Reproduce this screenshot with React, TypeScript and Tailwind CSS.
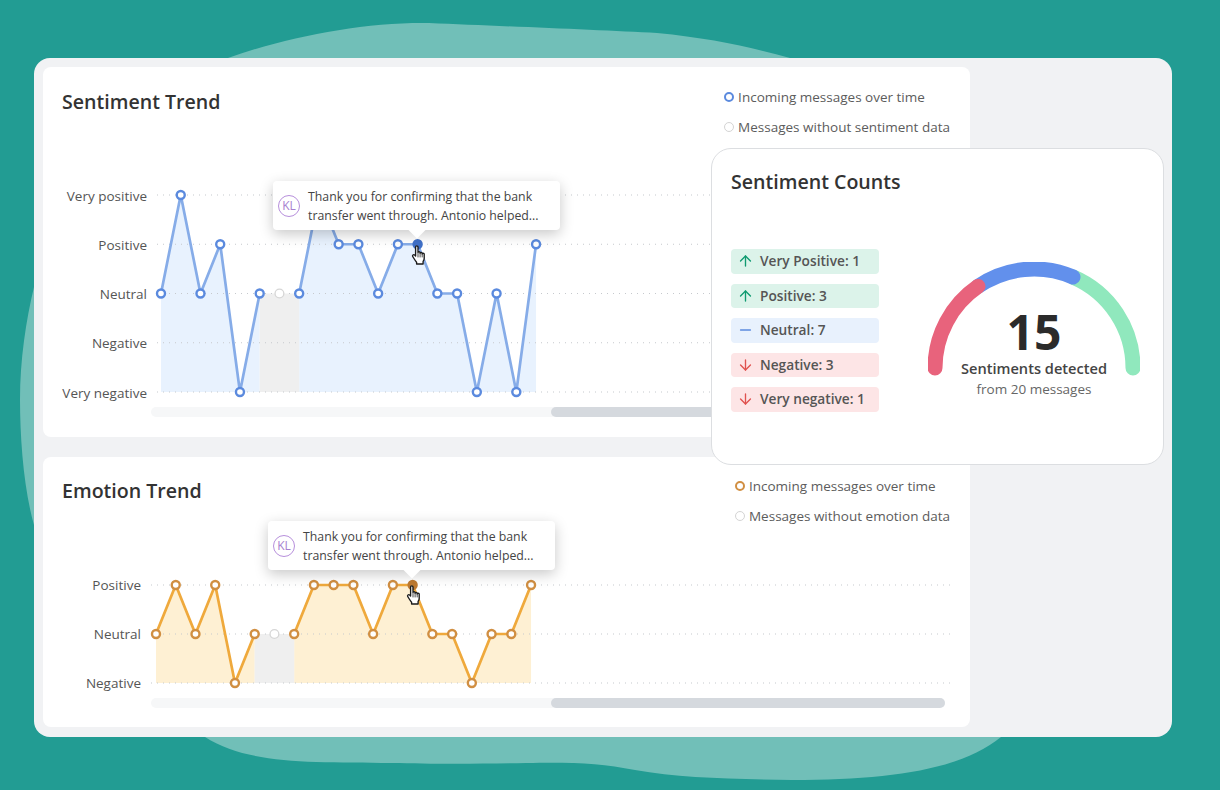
import { ArrowUp, ArrowDown, Minus } from "lucide-react";

const FONT = "font-['Open_Sans','Noto_Sans',sans-serif]";

type Theme = {
  line: string;
  dot: string;
  fill: string;
  active: string;
};

const BLUE: Theme = { line: "#86ace8", dot: "#5b8ade", fill: "#e8f2fe", active: "#3f70c8" };
const AMBER: Theme = { line: "#efa93c", dot: "#d18f42", fill: "#fef0d3", active: "#bd7a33" };

function Hand({ x, y }: { x: number; y: number }) {
  return (
    <g transform={`translate(${x} ${y})`} stroke="#1a1a1a" strokeWidth="1.35" strokeLinejoin="round" strokeLinecap="round">
      <path
        fill="#ffffff"
        d="M3.6 2c0-1.6 2.4-1.6 2.4 0v5.6c0-1.2 2.1-1.2 2.1 0v.6c0-1.2 2.1-1.2 2.1 0v.7c0-1.1 2-1.1 2 0v4.3c0 1.4-.5 2.4-1.1 3.2V19H4.6v-1.8C3.2 15.8 2 13.6.8 11.6 0 10.2 1.5 9 2.7 10l.9 1Z"
      />
      <path fill="none" strokeWidth="0.8" d="M6 8.5v3.5M8.1 8.8v3.2M10.2 9.2v2.8" />
    </g>
  );
}

function Chart({
  viewBox,
  width,
  height,
  ys,
  xs,
  gridStart,
  vals,
  theme,
  grey,
  active,
  hand,
}: {
  viewBox: string;
  width: number;
  height: number;
  ys: number[];
  xs: number[];
  gridStart: number;
  vals: number[];
  theme: Theme;
  grey: number;
  active: number;
  hand: [number, number];
}) {
  const base = ys[ys.length - 1];
  const pt = (i: number) => `${xs[i]},${ys[vals[i]]}`;
  const range = (a: number, b: number) => Array.from({ length: b - a + 1 }, (_, k) => a + k);
  const area = (a: number, b: number) =>
    `${xs[a]},${base} ` + range(a, b).map(pt).join(" ") + ` ${xs[b]},${base}`;
  const last = xs.length - 1;
  return (
    <svg width={width} height={height} viewBox={viewBox} className="shrink-0">
      <polygon points={area(0, grey - 1)} fill={theme.fill} />
      <polygon points={area(grey + 1, last)} fill={theme.fill} />
      <polygon points={area(grey - 1, grey + 1)} fill="#efefef" />
      {ys.map((y) => (
        <line key={y} x1={gridStart} x2={952} y1={y} y2={y} stroke="#c6c9cd" strokeWidth="1.2" strokeDasharray="1 5" />
      ))}
      <polyline points={range(0, grey - 1).map(pt).join(" ")} fill="none" stroke={theme.line} strokeWidth="2.7" strokeLinejoin="round" />
      <polyline points={range(grey + 1, last).map(pt).join(" ")} fill="none" stroke={theme.line} strokeWidth="2.7" strokeLinejoin="round" />
      {xs.map((x, i) => {
        const isGrey = i === grey;
        const isActive = i === active;
        return (
          <circle
            key={i}
            cx={x}
            cy={ys[vals[i]]}
            r={isGrey ? 4.4 : 4}
            fill={isActive ? theme.active : "#ffffff"}
            stroke={isGrey ? "#d6d6d6" : isActive ? theme.active : theme.dot}
            strokeWidth={isGrey ? 1.3 : 2.4}
          />
        );
      })}
      <Hand x={hand[0]} y={hand[1]} />
    </svg>
  );
}

function Legend({ color, label, strong }: { color: string; label: string; strong?: boolean }) {
  return (
    <div className="flex h-[20px] items-center gap-[4px] text-[13.5px] leading-[20px] text-[#5c5c5c]">
      <span
        className={`box-border block h-[10px] w-[10px] shrink-0 rounded-full bg-white ${strong ? "border-[2.5px]" : "border-[1.5px]"}`}
        style={{ borderColor: color }}
      />
      <span className="whitespace-nowrap">{label}</span>
    </div>
  );
}

function Tooltip({ className }: { className: string }) {
  return (
    <div
      className={`absolute flex h-[49px] w-[287px] items-center rounded-[4px] bg-white pl-[5px] shadow-[0_4px_14px_rgba(0,0,0,0.22)] ${className}`}
    >
      <span className="absolute left-[138px] top-[43px] block h-[12px] w-[12px] rotate-45 bg-white" />
      <span className="relative flex h-[22px] w-[22px] shrink-0 items-center justify-center rounded-full border-[1.5px] border-[#b78fdc] text-[12px] text-[#a77fd0]">
        KL
      </span>
      <p className="relative ml-[8px] whitespace-nowrap text-[12.3px] leading-[19px] text-[#444444]">
        Thank you for confirming that the bank
        <br />
        transfer went through. Antonio helped...
      </p>
    </div>
  );
}

function Pill({ bg, icon, label }: { bg: string; icon: React.ReactNode; label: string }) {
  return (
    <div className={`flex h-[24.5px] w-[148px] items-center rounded-[4px] pl-[6px] text-[13.7px] font-semibold text-[#555555] ${bg}`}>
      <span className="flex w-[17px] shrink-0 items-center justify-center">{icon}</span>
      <span className="ml-[6px] whitespace-nowrap pt-[1px]">{label}</span>
    </div>
  );
}

function Gauge() {
  // centre (106, 106) radius 99 within a 212 x 114 box
  return (
    <div className="relative ml-[49px] mt-[13px] h-[114px] w-[212px] shrink-0">
      <svg width="212" height="114" viewBox="0 0 212 114" fill="none" strokeWidth="15" strokeLinecap="round">
        <path d="M145 15A99 99 0 0 1 205 106" stroke="#90e8bd" />
        <path d="M50 24.4A99 99 0 0 1 145 15" stroke="#6290ec" />
        <path d="M7 106A99 99 0 0 1 50 24.4" stroke="#e8637c" />
      </svg>
      <div className="absolute inset-x-0 top-[46px] flex flex-col items-center">
        <span className="h-[48px] text-[48px] font-bold leading-[48px] text-[#2b2b2b]">15</span>
        <span className="mt-[2px] h-[20px] whitespace-nowrap text-[14.6px] font-semibold leading-[20px] text-[#444444]">
          Sentiments detected
        </span>
        <span className="mt-[1px] h-[20px] whitespace-nowrap text-[13.5px] leading-[20px] text-[#666666]">from 20 messages</span>
      </div>
    </div>
  );
}

const step = 19.74;
const xs1 = Array.from({ length: 20 }, (_, i) => 161 + i * step);
const xs2 = Array.from({ length: 20 }, (_, i) => 156 + i * step);
const sentimentVals = [2, 0, 2, 1, 4, 2, 2, 2, 0, 1, 1, 2, 1, 1, 2, 2, 4, 2, 4, 1];
const emotionVals = [1, 0, 1, 0, 2, 1, 1, 1, 0, 0, 0, 1, 0, 0, 1, 1, 2, 1, 1, 0];

export default function App() {
  return (
    <div className={`relative h-[790px] w-[1220px] overflow-hidden bg-[#229c93] pl-[34px] pt-[58px] ${FONT}`}>
      <svg className="absolute left-0 top-0" width="1220" height="790" viewBox="0 0 1220 790">
        <path
          fill="#71bfb8"
          d="M228 58C290 36 365 22 429 23C500 26 600 30 657 33C710 38 750 47 790 58L1001 737C960 770 890 780 792 780C730 779 680 778 635 770C600 763 570 762 526 763C480 764 430 764 392 763C310 762 250 765 205 737L34 525C24 490 20 440 20 400C20 360 26 320 34 287Z"
        />
      </svg>

      <div className="relative h-[679px] w-[1138px] rounded-[16px] bg-[#f1f2f4] p-[9px]">
        <div className="relative h-[370px] w-[927px] rounded-[8px] bg-white">
          <div className="flex h-[118px] items-start justify-between pl-[19px] pr-[20px]">
            <h2 className="mt-[21px] text-[19.6px] font-semibold leading-[28px] text-[#333333]">Sentiment Trend</h2>
            <div className="mt-[20px] flex flex-col gap-[10px]">
              <Legend color="#5b8ade" label="Incoming messages over time" strong />
              <Legend color="#d4d4d4" label="Messages without sentiment data" />
            </div>
          </div>
          <div className="flex">
            <div className="flex h-[217px] w-[104px] flex-col items-end gap-[29.25px] pt-[0.5px] text-[13.5px] leading-[20px] text-[#555555]">
              <span>Very positive</span>
              <span>Positive</span>
              <span>Neutral</span>
              <span>Negative</span>
              <span>Very negative</span>
            </div>
            <Chart
              viewBox="147 185 823 217"
              width={823}
              height={217}
              ys={[195, 244.25, 293.5, 342.75, 392]}
              xs={xs1}
              gridStart={157}
              vals={sentimentVals}
              theme={BLUE}
              grey={6}
              active={13}
              hand={[412, 245]}
            />
          </div>
          <div className="ml-[108px] mt-[5px] flex h-[10px] w-[794px] justify-end rounded-[5px] bg-[#f6f7f8]">
            <div className="h-[10px] w-[394px] rounded-[5px] bg-[#d5d9de]" />
          </div>
          <Tooltip className="left-[230px] top-[114px]" />
        </div>

        <div className="relative mt-[20px] h-[270px] w-[927px] rounded-[8px] bg-white">
          <div className="flex h-[118px] items-start justify-between pl-[19px] pr-[20px]">
            <h2 className="mt-[20px] text-[19.6px] font-semibold leading-[28px] text-[#333333]">Emotion Trend</h2>
            <div className="mt-[19px] flex flex-col gap-[10px]">
              <Legend color="#d18f42" label="Incoming messages over time" strong />
              <Legend color="#d4d4d4" label="Messages without emotion data" />
            </div>
          </div>
          <div className="flex">
            <div className="flex h-[118px] w-[98px] flex-col items-end gap-[29px] text-[13.5px] leading-[20px] text-[#555555]">
              <span>Positive</span>
              <span>Neutral</span>
              <span>Negative</span>
            </div>
            <Chart
              viewBox="141 575 829 118"
              width={829}
              height={118}
              ys={[585, 634, 683]}
              xs={xs2}
              gridStart={151}
              vals={emotionVals}
              theme={AMBER}
              grey={6}
              active={13}
              hand={[407, 585]}
            />
          </div>
          <div className="ml-[108px] mt-[5px] flex h-[10px] w-[794px] justify-end rounded-[5px] bg-[#f6f7f8]">
            <div className="h-[10px] w-[394px] rounded-[5px] bg-[#d5d9de]" />
          </div>
          <Tooltip className="left-[225px] top-[64px]" />
        </div>

        <div className="absolute left-[677px] top-[90px] h-[317px] w-[453px] rounded-[20px] border border-[#dcdee1] bg-white pl-[19px]">
          <h2 className="mt-[19px] text-[19.6px] font-semibold leading-[28px] text-[#333333]">Sentiment Counts</h2>
          <div className="mt-[53px] flex items-start">
            <div className="flex w-[148px] shrink-0 flex-col gap-[10px]">
              <Pill bg="bg-[#dcf3ea]" label="Very Positive: 1" icon={<ArrowUp size={24} strokeWidth={1.9} className="text-[#0f9a70]" />} />
              <Pill bg="bg-[#dcf3ea]" label="Positive: 3" icon={<ArrowUp size={24} strokeWidth={1.9} className="text-[#0f9a70]" />} />
              <Pill bg="bg-[#e8f1fd]" label="Neutral: 7" icon={<Minus size={24} strokeWidth={1.8} className="text-[#5b8ade]" />} />
              <Pill bg="bg-[#fde5e6]" label="Negative: 3" icon={<ArrowDown size={24} strokeWidth={1.9} className="text-[#e0524f]" />} />
              <Pill bg="bg-[#fde5e6]" label="Very negative: 1" icon={<ArrowDown size={24} strokeWidth={1.9} className="text-[#e0524f]" />} />
            </div>
            <Gauge />
          </div>
        </div>
      </div>
    </div>
  );
}
